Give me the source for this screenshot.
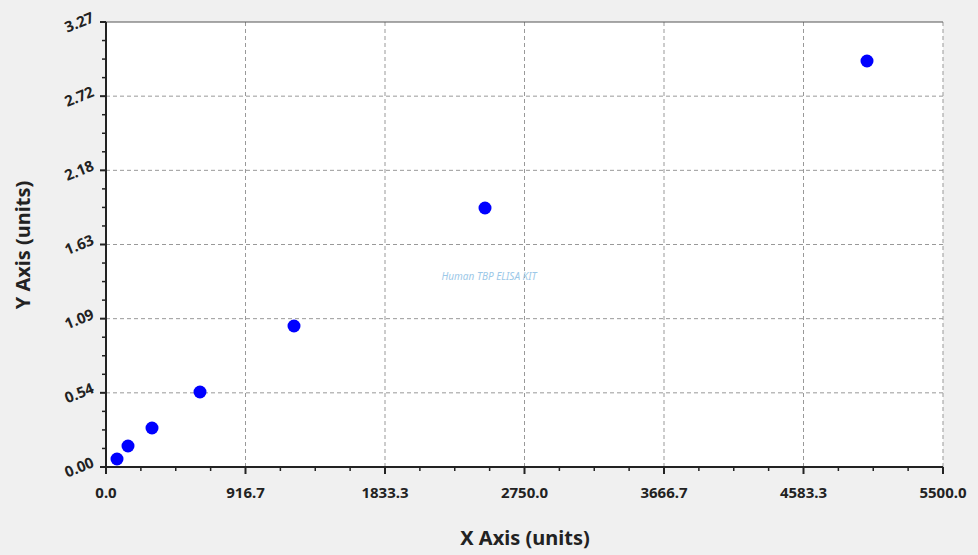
export default function App() {
  const L = 106, R = 943, T = 22, B = 467;
  const xs = [0, 916.7, 1833.3, 2750.0, 3666.7, 4583.3, 5500.0];
  const ys = ["0.00", "0.54", "1.09", "1.63", "2.18", "2.72", "3.27"];
  const xp = (i) => L + (i * (R - L)) / 6;
  const yp = (i) => B - (i * (B - T)) / 6;
  const pts = [[117, 459], [128, 446], [152, 428], [200, 392], [294, 326], [485, 208], [867, 61]];
  const minors = [];
  for (let i = 0; i < 6; i++) for (let k = 1; k < 4; k++) minors.push(i + k / 4);
  return (
    <div className="w-[978px] h-[555px] bg-[#f0f0f0] font-['Liberation_Sans',Arial,sans-serif]">
      <svg width="978" height="555">
        <rect x={L} y={T} width={R - L} height={B - T} fill="#fff" />
        {[1, 2, 3, 4, 5, 6].map((i) => (
          <line key={"vx" + i} x1={xp(i)} x2={xp(i)} y1={T} y2={B} stroke="#999" strokeDasharray="4 3" />
        ))}
        {[1, 2, 3, 4, 5].map((i) => (
          <line key={"hy" + i} x1={L} x2={R} y1={yp(i)} y2={yp(i)} stroke="#999" strokeDasharray="4 3" />
        ))}
        <line x1={L} x2={R} y1={T} y2={T} stroke="#555" strokeWidth="1" />
        <line x1={L} x2={L} y1={T} y2={B + 6} stroke="#222" strokeWidth="2" />
        <line x1={L - 6} x2={R} y1={B} y2={B} stroke="#222" strokeWidth="2" />
        {[0, 1, 2, 3, 4, 5, 6].map((i) => (
          <g key={"t" + i}>
            <line x1={L - 6} x2={L} y1={yp(i)} y2={yp(i)} stroke="#222" strokeWidth="2" />
            <line x1={xp(i)} x2={xp(i)} y1={B} y2={B + 7} stroke="#222" strokeWidth="2" />
            <text x={L - 12} y={yp(i) + 6} textAnchor="end" fontSize="15" fontWeight="bold" fill="#222" transform={`rotate(-22 ${L - 28} ${yp(i)})`}>{ys[i]}</text>
            <text x={xp(i)} y={B + 31} textAnchor="middle" fontSize="15" fontWeight="bold" fill="#222">{xs[i].toFixed(1)}</text>
          </g>
        ))}
        {minors.map((m) => (
          <g key={"m" + m}>
            <line x1={L - 4} x2={L} y1={yp(m)} y2={yp(m)} stroke="#222" strokeWidth="1.5" />
            <line x1={xp(m)} x2={xp(m)} y1={B} y2={B + 4} stroke="#222" strokeWidth="1.5" />
          </g>
        ))}
        {pts.map(([x, y], i) => (
          <circle key={i} cx={x} cy={y} r="6.5" fill="#0000ff" />
        ))}
        <text x="489" y="280" textAnchor="middle" fontSize="10" fontStyle="italic" fill="#9cc8e8">Human TBP ELISA KIT</text>
        <text x="30" y="245" textAnchor="middle" fontSize="20" fontWeight="bold" fill="#222" transform="rotate(-90 30 245)">Y Axis (units)</text>
        <text x="525" y="545" textAnchor="middle" fontSize="20" fontWeight="bold" fill="#222">X Axis (units)</text>
      </svg>
    </div>
  );
}
